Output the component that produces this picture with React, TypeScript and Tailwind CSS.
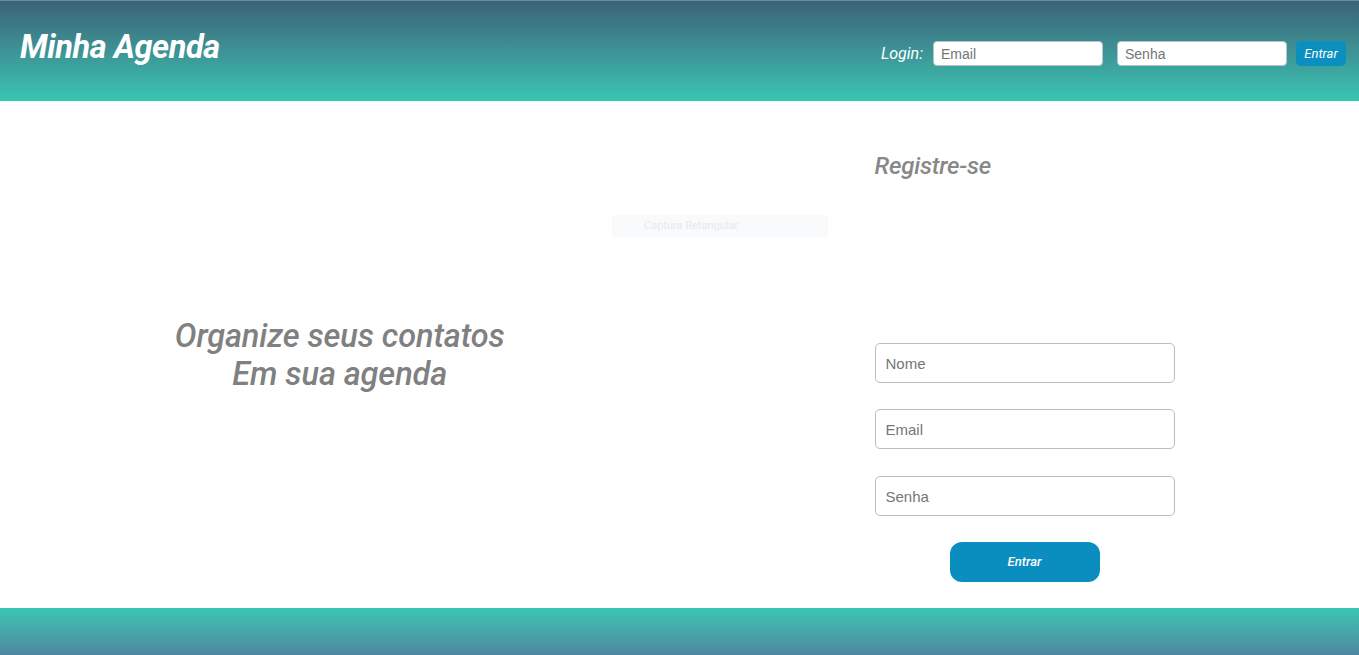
import React from "react";

export default function App() {
  return (
    <div className="relative flex min-h-[655px] w-full flex-col bg-white font-['Roboto',_'Liberation_Sans',_sans-serif]">
      <header className="flex h-[101px] items-start justify-between border-t border-[#6f8c9b] bg-gradient-to-b from-[#3a6278] to-[#37c6b3] px-[20px]">
        <h1 className="mt-[26px] text-[32.5px] font-bold italic leading-[40px] tracking-[-0.4px] text-white">Minha Agenda</h1>
        <div className="mt-[40px] mr-[-7px] flex items-center">
          <span className="mr-[10px] text-[16px] italic text-white">Login:</span>
          <input
            placeholder="Email"
            className="h-[25px] w-[170px] rounded-[4px] border border-[#b5c4c8] bg-white px-[7px] font-['Liberation_Sans',_sans-serif] text-[14px] text-[#333] placeholder:text-[#757575] outline-none"
          />
          <input
            placeholder="Senha"
            className="ml-[14px] h-[25px] w-[170px] rounded-[4px] border border-[#b5c4c8] bg-white px-[7px] font-['Liberation_Sans',_sans-serif] text-[14px] text-[#333] placeholder:text-[#757575] outline-none"
          />
          <button className="ml-[9px] h-[25px] w-[50px] rounded-[5px] bg-[#0b8fbf] text-[13px] italic text-white">
            Entrar
          </button>
        </div>
      </header>

      <main className="relative grid h-[507px] grid-cols-2">
        <div className="flex items-center justify-center">
          <p className="mt-[0px] text-center text-[32.5px] font-medium italic leading-[38px] tracking-[-0.1px] text-[#808080]">
            Organize seus contatos
            <br />
            Em sua agenda
          </p>
        </div>
        <div className="flex flex-col pl-[195px] pt-[50px]">
          <h2 className="text-[24px] font-medium italic leading-[30px] tracking-[-0.2px] text-[#888888]">Registre-se</h2>
          <form className="mt-[162px] flex w-[300px] flex-col items-center">
            <input
              placeholder="Nome"
              className="h-[40px] w-[300px] rounded-[5px] border border-[#bdbdbd] px-[10px] font-['Liberation_Sans',_sans-serif] text-[15px] placeholder:text-[#767676] outline-none"
            />
            <input
              placeholder="Email"
              className="mt-[26px] h-[40px] w-[300px] rounded-[5px] border border-[#bdbdbd] px-[10px] font-['Liberation_Sans',_sans-serif] text-[15px] placeholder:text-[#767676] outline-none"
            />
            <input
              placeholder="Senha"
              className="mt-[27px] h-[40px] w-[300px] rounded-[5px] border border-[#bdbdbd] px-[10px] font-['Liberation_Sans',_sans-serif] text-[15px] placeholder:text-[#767676] outline-none"
            />
            <button
              type="button"
              className="mt-[26px] h-[40px] w-[150px] rounded-[12px] bg-[#0a8ebf] text-[13px] font-medium italic text-white"
            >
              Entrar
            </button>
          </form>
        </div>
        <div className="absolute left-[612px] top-[114px] flex h-[23px] w-[216px] items-center bg-[#f8fafc] pl-[32px] text-[11px] text-[#e6e9ee]">
          Captura Retangular
        </div>
      </main>

      <footer className="h-[47px] bg-gradient-to-b from-[#37c6b3] to-[#4e879f]" />
    </div>
  );
}
